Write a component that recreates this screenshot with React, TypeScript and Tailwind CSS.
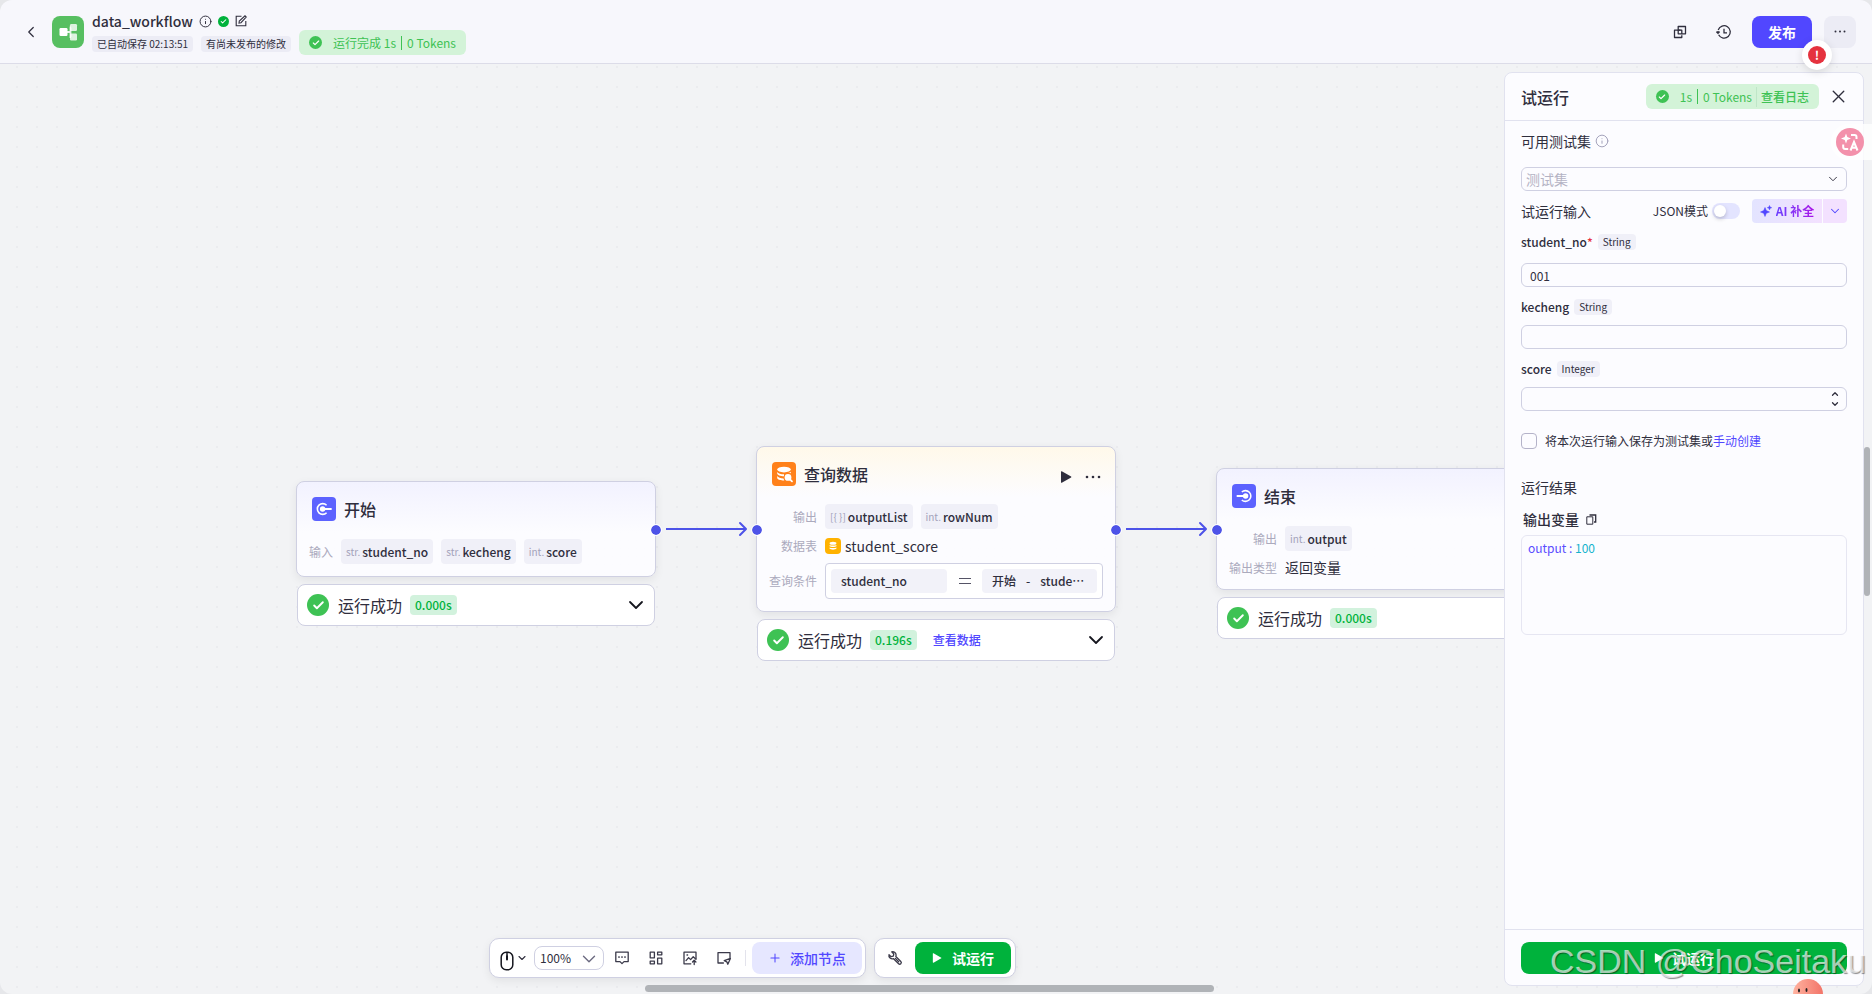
import { useState, type ReactNode } from 'react';
import { Check, ChevronDown, ChevronLeft, ChevronUp, Info, Plus, X } from 'lucide-react';

function CheckDot({ className, size }: { className: string; size: number }) {
  return (
    <span className={`flex shrink-0 items-center justify-center rounded-full text-white ${className}`}>
      <Check size={size} strokeWidth={3.5} />
    </span>
  );
}

function PlayIcon({ className }: { className?: string }) {
  return (
    <svg viewBox="0 0 12 12" className={className} fill="currentColor" aria-hidden="true">
      <path d="M1 .8v10.4c0 .5.4.7.8.5l9.3-5.3c.4-.2.4-.6 0-.8L1.8.3C1.4.1 1 .3 1 .8z" />
    </svg>
  );
}

function Dots({ className }: { className?: string }) {
  return (
    <svg viewBox="0 0 16 4" className={className} fill="currentColor" aria-hidden="true">
      <circle cx="2" cy="2" r="1.3" />
      <circle cx="8" cy="2" r="1.3" />
      <circle cx="14" cy="2" r="1.3" />
    </svg>
  );
}

function StartIcon() {
  return (
    <svg viewBox="0 0 24 24" className="size-6 rounded" aria-hidden="true">
      <rect width="24" height="24" fill="#5c62ff" />
      <path d="M14.6 8.2A5.4 5.4 0 1 0 14.6 15.8" fill="none" stroke="#fff" strokeWidth="1.6" />
      <circle cx="10.6" cy="12" r="2.7" fill="#fff" />
      <path d="M11 12h8" stroke="#fff" strokeWidth="1.8" strokeLinecap="round" />
    </svg>
  );
}

function EndIcon() {
  return (
    <svg viewBox="0 0 24 24" className="size-6 rounded" aria-hidden="true">
      <rect width="24" height="24" fill="#5c62ff" />
      <path d="M9.8 8A5.4 5.4 0 1 1 9.8 16" fill="none" stroke="#fff" strokeWidth="1.6" />
      <circle cx="13.6" cy="12" r="2.7" fill="#fff" />
      <path d="M5.4 12h8" stroke="#fff" strokeWidth="1.8" strokeLinecap="round" />
    </svg>
  );
}

function QueryIcon() {
  return (
    <svg viewBox="0 0 24 24" className="size-6 rounded" aria-hidden="true">
      <rect width="24" height="24" fill="#ff811a" />
      <g fill="#fff">
        <ellipse cx="12" cy="7.6" rx="6.8" ry="2.8" />
        <path d="M5.2 10c1 1.6 3.6 2.3 6.8 2.3v2C8.4 14.3 5.2 13.2 5.2 11.6z" />
        <path d="M5.2 14c1 1.6 3.3 2.3 6.3 2.4l.8 2.2C8.4 18.6 5.2 17.6 5.2 15.8z" />
        <path d="M18.8 9.8v1.6c-.5-.4-1.5-.8-2.5-.9 1.1-.2 2-.4 2.5-.7z" />
        <circle cx="16" cy="15.4" r="3.4" />
      </g>
      <path d="m18.2 17.6 1.8 1.8" stroke="#fff" strokeWidth="1.8" strokeLinecap="round" />
    </svg>
  );
}

function TableIcon() {
  return (
    <svg viewBox="0 0 16 16" className="size-4 rounded" aria-hidden="true">
      <rect width="16" height="16" fill="#ffb200" />
      <g fill="#fff">
        <ellipse cx="8" cy="5.2" rx="3.4" ry="1.5" />
        <path d="M4.6 6.9c1 .8 5.8.8 6.8 0v1.3c-1 1.1-5.8 1.1-6.8 0z" />
        <path d="M4.6 9.5c1 .8 5.8.8 6.8 0v1.3c-1 1.1-5.8 1.1-6.8 0z" />
      </g>
    </svg>
  );
}

function TypedTag({ type, name }: { type: string; name: string }) {
  return (
    <span className="flex h-[25px] items-center gap-[2px] rounded bg-[#f0f0f8] px-[5px] text-xs">
      <span className="text-[10px] text-[#a3a2ba]">{type}</span>
      <span className="font-medium">{name}</span>
    </span>
  );
}

function Row({ label, wide, children }: { label: string; wide?: boolean; children: ReactNode }) {
  return (
    <div className="flex items-center gap-2">
      <span className={`shrink-0 text-right text-xs text-[#abaabd] ${wide ? 'w-12' : 'w-6'}`}>{label}</span>
      {children}
    </div>
  );
}

function StatusBar({ time, link }: { time: string; link?: string }) {
  return (
    <div className="mx-px mt-[7px] flex h-[42px] items-center rounded-lg border border-[#cfd0e2] bg-white pr-[6px] pl-[9px]">
      <CheckDot className="size-[22px] bg-[#3ec254]" size={13} />
      <span className="ml-[9px] text-base">运行成功</span>
      <span className="ml-2 rounded bg-[#d2f2dd] px-[5px] text-xs leading-5 font-medium text-[#00b23c]">{time}</span>
      {link && (
        <a href="#data" className="ml-4 text-xs font-medium text-[#5147ff]">
          {link}
        </a>
      )}
      <button className="ml-auto" aria-label="展开">
        <ChevronDown size={24} strokeWidth={1.8} className="text-[#15161e]" />
      </button>
    </div>
  );
}

function Port({ className }: { className: string }) {
  return <span className={`absolute size-[10px] -translate-1/2 rounded-full bg-[#4d53e8] outline-1 outline-white ${className}`} />;
}

type NodeProps = {
  icon: ReactNode;
  title: string;
  place: string;
  tint: string;
  actions?: ReactNode;
  status: ReactNode;
  children: ReactNode;
};

function FlowNode({ icon, title, place, tint, actions, status, children }: NodeProps) {
  return (
    <section className={`absolute w-[360px] ${place}`}>
      <div
        className={`rounded-lg border border-[#cfd0e2] bg-gradient-to-b to-[#fcfcff] to-[50px] px-3 pb-3 shadow-[0_3px_10px_rgba(0,0,0,0.07)] ${tint}`}
      >
        <header className="flex items-center gap-2 pt-[15px] pb-[18px] pl-[3px]">
          {icon}
          <h2 className="text-base leading-6 font-medium">{title}</h2>
          {actions}
        </header>
        <div className="flex flex-col gap-[7px]">{children}</div>
      </div>
      {status}
    </section>
  );
}

function Arrow({ place }: { place: string }) {
  return (
    <svg viewBox="0 0 84 16" className={`absolute h-4 w-[84px] ${place}`} fill="none" stroke="#4d53e8" strokeWidth="2">
      <path d="M1 8h80" />
      <path d="m75 2 6 6-6 6" strokeLinecap="round" strokeLinejoin="round" />
    </svg>
  );
}

function Canvas() {
  return (
    <div className="absolute inset-0 overflow-hidden bg-[#f2f3f5] bg-[radial-gradient(circle,#ebecef_1px,transparent_1.5px)] bg-[length:20px_20px] bg-[position:7px_13px]">
      <FlowNode
        icon={<StartIcon />}
        title="开始"
        place="left-[296px] top-[417px]"
        tint="from-[#f2f2ff]"
        status={<StatusBar time="0.000s" />}
      >
        <Row label="输入">
          <TypedTag type="str." name="student_no" />
          <TypedTag type="str." name="kecheng" />
          <TypedTag type="int." name="score" />
        </Row>
      </FlowNode>

      <FlowNode
        icon={<QueryIcon />}
        title="查询数据"
        place="left-[756px] top-[382px]"
        tint="from-[#fff9ea]"
        actions={
          <div className="ml-auto flex items-center gap-3 pt-[6px] pr-px">
            <button aria-label="运行节点">
              <PlayIcon className="size-3" />
            </button>
            <button aria-label="更多">
              <Dots className="h-1 w-[18px]" />
            </button>
          </div>
        }
        status={<StatusBar time="0.196s" link="查看数据" />}
      >
        <Row label="输出" wide>
          <TypedTag type="[{ }]" name="outputList" />
          <TypedTag type="int." name="rowNum" />
        </Row>
        <Row label="数据表" wide>
          <span className="flex h-5 items-center gap-1 text-sm">
            <TableIcon />
            student_score
          </span>
        </Row>
        <Row label="查询条件" wide>
          <div className="flex h-9 flex-1 items-center justify-between rounded border border-[#cfd0e2] bg-white px-[5px] text-xs">
            <span className="h-6 w-[116px] rounded bg-[#f2f2f9] px-[10px] leading-6 font-medium">student_no</span>
            <svg viewBox="0 0 12 6" className="h-[6px] w-3" stroke="#555466" strokeWidth="1" aria-label="等于">
              <path d="M0 .5h12M0 5.5h12" />
            </svg>
            <span lang="zh-CN" className="flex h-6 w-[115px] items-center gap-[10px] rounded bg-[#f2f2f9] px-[10px] font-medium">
              <span>开始</span>
              <span>-</span>
              <span>stude…</span>
            </span>
          </div>
        </Row>
      </FlowNode>

      <FlowNode
        icon={<EndIcon />}
        title="结束"
        place="left-[1216px] top-[404px]"
        tint="from-[#f2f2ff]"
        status={<StatusBar time="0.000s" />}
      >
        <Row label="输出" wide>
          <TypedTag type="int." name="output" />
        </Row>
        <Row label="输出类型" wide>
          <span className="text-sm leading-[19px]">返回变量</span>
        </Row>
      </FlowNode>

      <Arrow place="left-[665px] top-[457px]" />
      <Arrow place="left-[1125px] top-[457px]" />
      <Port className="left-[656px] top-[466px]" />
      <Port className="left-[757px] top-[466px]" />
      <Port className="left-[1116px] top-[466px]" />
      <Port className="left-[1217px] top-[466px]" />
    </div>
  );
}

function ToolButton({ label, children }: { label: string; children: ReactNode }) {
  return (
    <button aria-label={label} className="flex h-8 w-[34px] items-center justify-center">
      <svg viewBox="0 0 16 16" className="size-4" fill="none" stroke="#3b3a4a" strokeWidth="1.3" strokeLinejoin="round" strokeLinecap="round">
        {children}
      </svg>
    </button>
  );
}

function Toolbar() {
  return (
    <div className="absolute right-[367px] bottom-4 left-0 flex justify-center gap-2">
      <div className="flex h-10 items-center rounded-[10px] border border-[#cfd0e2] bg-white pr-[3px] pl-[10px] shadow-[0_3px_10px_rgba(0,0,0,0.07)]">
        <button className="flex items-center gap-[2px]" aria-label="鼠标模式">
          <svg viewBox="0 0 14 20" className="mt-[6px] h-5 w-[14px]" fill="none" stroke="#15161e" strokeWidth="1.5">
            <rect x="1.2" y="1.2" width="11.6" height="17.6" rx="5" />
            <path d="M7 4.8v3.6" strokeWidth="2" strokeLinecap="round" />
            <path d="M7 1v3" />
          </svg>
          <ChevronDown size={12} strokeWidth={2.2} />
        </button>
        <div className="relative ml-[6px] text-xs">
          <select aria-label="缩放" className="block h-6 w-[70px] appearance-none rounded-lg border border-[#cfd0e2] bg-white pl-[5px]">
            <option>100%</option>
          </select>
          <ChevronDown size={22} strokeWidth={1.5} className="pointer-events-none absolute top-[2px] right-1 text-[#6b6a80]" />
        </div>
        <div className="ml-px flex">
          <ToolButton label="注释">
            <path d="M1.8 2.2h12.4v9.4H10l-2 2-2-2H1.8z" />
            <path d="M4.9 7h.2M7.9 7h.2M10.9 7h.2" strokeWidth="1.7" />
          </ToolButton>
          <ToolButton label="布局">
            <path d="M2.2 2.2h4.2v5.6H2.2zM9.6 2.2h4.2v2.6H9.6zM2.2 11.2h4.2v2.6H2.2zM9.6 8.2h4.2v5.6H9.6z" />
          </ToolButton>
          <ToolButton label="导出图片">
            <path d="M8.8 13.8H2V2.2h12v6.6" />
            <path d="m4 10.6 2.6-3 2 2 2.6-2.8 2.8 2.4" />
            <path d="M5 5h.6M12.2 14.6v-4M10.5 12l1.7-1.7 1.7 1.7" />
          </ToolButton>
          <ToolButton label="小地图">
            <path d="M7.4 13H2V2.6h12v5" />
            <path d="m8.2 10.6 6.2-2.2-2.6 5.8-1-2.4z" />
          </ToolButton>
        </div>
        <span className="mr-[6px] ml-1 h-4 w-px bg-[#e3e3ec]" />
        <button className="flex h-8 w-[110px] items-center justify-center gap-2 rounded-lg bg-[#e6e7ff] text-sm font-medium text-[#5147ff]">
          <Plus size={14} strokeWidth={1.8} />
          添加节点
        </button>
      </div>
      <div className="flex h-10 items-center rounded-[10px] border border-[#cfd0e2] bg-white pr-1 pl-[3px] shadow-[0_3px_10px_rgba(0,0,0,0.07)]">
        <ToolButton label="调试">
          <path d="M2 4.6 4.1 6.7l2.2-.5.5-2.2L4.7 1.9c2-.6 4.3.6 4.4 3.1 0 .6-.1 1-.3 1.5l5 5a1.5 1.5 0 0 1-2.2 2.2l-5-5C4 9.6 1.3 7.3 2 4.6z" />
          <path d="m8.4 8.4 3.3 3.3" />
        </ToolButton>
        <button className="ml-[3px] flex h-8 w-24 items-center justify-center gap-[10px] rounded-lg bg-[#00b23c] text-sm font-bold text-white">
          <PlayIcon className="size-[10px]" />
          试运行
        </button>
      </div>
    </div>
  );
}

function Header() {
  return (
    <header className="flex h-16 shrink-0 items-center rounded-t-xl border-b border-[#dcdce8] bg-[#f7f7fc] pr-4 pl-[22px]">
      <button aria-label="返回">
        <ChevronLeft size={18} strokeWidth={1.6} />
      </button>
      <svg viewBox="0 0 32 32" className="ml-3 size-8 rounded-lg" aria-hidden="true">
        <rect width="32" height="32" fill="#57bf61" />
        <path d="M14 16h4.5M18.5 16v-4.5H19M18.5 16v5H19" stroke="#fff" strokeOpacity=".85" strokeWidth="1.8" fill="none" />
        <rect x="7.5" y="12" width="8" height="8" rx="1.2" fill="#fff" />
        <rect x="18" y="8" width="7" height="7" rx="1.2" fill="#fff" fillOpacity=".8" />
        <rect x="18" y="17.5" width="7" height="7" rx="1.2" fill="#fff" fillOpacity=".8" />
      </svg>
      <div className="ml-2 flex flex-col gap-[5px]">
        <div className="flex h-5 items-center gap-[6px]">
          <h1 className="text-sm font-medium">data_workflow</h1>
          <Info size={13} strokeWidth={1.8} />
          <CheckDot className="size-[11px] bg-[#00b23c]" size={7} />
          <button aria-label="编辑">
            <svg viewBox="0 0 12 12" className="size-3" fill="none" stroke="currentColor" strokeWidth="1.1">
              <path d="M6.5 1.2H1.2v9.6h9.6V6" />
              <path d="M4 8l.3-2L10 .8l1.2 1.2L6 7.7z" />
            </svg>
          </button>
        </div>
        <div className="flex h-4 items-center gap-2 pb-px text-[10px] leading-4">
          <span className="rounded bg-[#ececf5] px-[5px]">已自动保存 02:13:51</span>
          <span className="rounded bg-[#ececf5] px-[5px]">有尚未发布的修改</span>
        </div>
      </div>
      <div className="mt-[22px] ml-2 flex h-[25px] items-center rounded-md bg-[#d3f3d8] px-[10px] text-xs text-[#3ec254]">
        <CheckDot className="size-[13px] bg-[#3ec254]" size={8} />
        <span className="ml-[11px]">运行完成 1s</span>
        <span className="mx-[5px] h-[14px] w-px bg-[#3ec254]" />
        <span>0 Tokens</span>
      </div>

      <div className="relative ml-auto flex items-center">
        <button aria-label="复制" className="flex size-8 items-center justify-center">
          <svg viewBox="0 0 14 14" className="size-[14px]" fill="none" stroke="currentColor" strokeWidth="1.3" strokeLinejoin="round">
            <path d="M7.5 5.2H5.2V1.5h7.3v7.3H8.8" />
            <path d="M6.5 8.8h2.3V5.2H1.5v7.3h7.3v-2.3M5.2 5.2v3.6h1.6" />
          </svg>
        </button>
        <button aria-label="历史" className="ml-3 flex size-8 items-center justify-center">
          <svg viewBox="0 0 16 16" className="size-4" fill="none" stroke="currentColor" strokeWidth="1.3">
            <path d="M2.6 10.8A6.2 6.2 0 1 0 2.2 6" />
            <path d="M.3 7.6 2 9.3l1.7-1.7M2 9V7M8 4.8v4h3" />
          </svg>
        </button>
        <button className="ml-3 h-8 w-[60px] rounded-lg bg-[#5147ff] text-sm font-bold text-white">发布</button>
        <button aria-label="更多" className="ml-3 flex size-8 items-center justify-center rounded-lg bg-[#ececf5]">
          <Dots className="h-[3px] w-3" />
        </button>
        <span className="absolute top-6 right-6 z-20 flex size-[30px] items-center justify-center rounded-full bg-white shadow-[0_2px_8px_rgba(0,0,0,0.12)]">
          <span className="flex size-[18px] items-center justify-center rounded-full bg-[#e5323e] text-xs font-bold text-white">!</span>
        </span>
      </div>
    </header>
  );
}

function FieldLabel({ id, type, required }: { id: string; type: string; required?: boolean }) {
  return (
    <div className="flex h-4 items-center gap-[5px] text-xs">
      <label htmlFor={id} className="font-medium">
        {id}
        {required && <span className="align-top text-[#e5323e]">*</span>}
      </label>
      <span className="rounded bg-[#f0f0f8] px-[5px] text-[10px] leading-4">{type}</span>
    </div>
  );
}

const fieldClass = 'block h-6 w-full appearance-none rounded-md border border-[#cfd0e2] bg-transparent px-2 text-xs';

function RunPanel() {
  const [studentNo, setStudentNo] = useState('001');
  const [kecheng, setKecheng] = useState('');
  const [score, setScore] = useState('');

  return (
    <aside className="absolute top-2 right-2 bottom-2 flex w-[360px] flex-col rounded-lg border border-[#e1e2ef] bg-[#fcfcff]">
      <header className="flex h-12 shrink-0 items-center border-b border-[#e1e2ef] pr-[14px] pl-4">
        <h2 className="text-base font-medium">试运行</h2>
        <div className="ml-auto flex h-[25px] items-center rounded-md bg-[#d3f3d8] px-[10px] text-xs text-[#3ec254]">
          <CheckDot className="size-[13px] bg-[#3ec254]" size={8} />
          <span className="ml-[11px]">1s</span>
          <span className="mx-[5px] h-[15px] w-px bg-[#3ec254]" />
          <span>0 Tokens</span>
          <span className="mx-1 h-5 w-px bg-[#bfe6c8]" />
          <a href="#log" className="font-medium">
            查看日志
          </a>
        </div>
        <button aria-label="关闭" className="ml-[9px]">
          <X size={21} strokeWidth={1.6} />
        </button>
      </header>

      <div className="flex-1 px-4 pt-[10px]">
        <div className="flex h-5 items-center gap-1 text-sm">
          <label htmlFor="testset">可用测试集</label>
          <Info size={14} strokeWidth={1.7} className="text-[#a3a2ba]" />
        </div>
        <div className="relative mt-4">
          <select
            id="testset"
            defaultValue=""
            className="block h-6 w-full appearance-none rounded-md border border-[#cfd0e2] bg-transparent pl-1 text-sm leading-5 text-[#b4b3c4]"
          >
            <option value="">测试集</option>
          </select>
          <ChevronDown size={14} strokeWidth={1.6} className="pointer-events-none absolute top-[5px] right-[7px]" />
        </div>

        <div className="mt-2 flex h-6 items-center">
          <h3 className="text-sm">试运行输入</h3>
          <label className="ml-auto flex items-center gap-1 text-xs">
            JSON模式
            <input
              type="checkbox"
              role="switch"
              className="flex h-4 w-7 appearance-none items-center rounded-full bg-[#e3e4ff] px-[2px] before:size-3 before:rounded-full before:bg-white before:shadow-[0_2px_4px_rgba(0,0,0,0.2)]"
            />
          </label>
          <div className="ml-3 flex h-6 gap-px">
            <button className="flex w-[70px] items-center justify-center gap-1 rounded-l bg-gradient-to-r from-[#e3e4ff] to-[#f3e1ff] text-xs font-bold">
              <svg viewBox="0 0 12 12" className="size-3" fill="#5147ff" aria-hidden="true">
                <path d="M5 2.5 6.3 5.5 9.5 7 6.3 8.3 5 11.5 3.7 8.3.5 7l3.2-1.5zM9.5.5l.6 1.6 1.6.6-1.6.6-.6 1.6-.6-1.6-1.6-.6 1.6-.6z" stroke="#5147ff" strokeWidth=".5" />
              </svg>
              <span className="bg-gradient-to-r from-[#6a3dff] to-[#a80ee8] bg-clip-text text-transparent">AI 补全</span>
            </button>
            <button aria-label="更多补全" className="flex w-6 items-center justify-center rounded-r bg-[#f3e1ff] text-[#5147ff]">
              <ChevronDown size={14} strokeWidth={1.8} />
            </button>
          </div>
        </div>

        <div className="mt-[11px]">
          <FieldLabel id="student_no" type="String" required />
          <input id="student_no" value={studentNo} onChange={(e) => setStudentNo(e.target.value)} className={`mt-[13px] ${fieldClass}`} />
        </div>
        <div className="mt-3">
          <FieldLabel id="kecheng" type="String" />
          <input id="kecheng" value={kecheng} onChange={(e) => setKecheng(e.target.value)} className={`mt-[10px] ${fieldClass}`} />
        </div>
        <div className="mt-3">
          <FieldLabel id="score" type="Integer" />
          <div className="relative mt-[10px]">
            <input id="score" inputMode="numeric" value={score} onChange={(e) => setScore(e.target.value)} className={fieldClass} />
            <div className="absolute top-[2px] right-[7px] flex flex-col">
              <button aria-label="增加" onClick={() => setScore(String(Number(score) + 1))}>
                <ChevronUp size={10} strokeWidth={3} />
              </button>
              <button aria-label="减少" onClick={() => setScore(String(Number(score) - 1))}>
                <ChevronDown size={10} strokeWidth={3} />
              </button>
            </div>
          </div>
        </div>

        <div className="mt-[22px] flex h-4 items-center gap-2 text-xs">
          <input id="save" type="checkbox" className="size-4 appearance-none rounded border border-[#b4b3c9]" />
          <span>
            <label htmlFor="save">将本次运行输入保存为测试集或</label>
            <a href="#create" className="text-[#5147ff]">
              手动创建
            </a>
          </span>
        </div>

        <h3 className="mt-7 text-sm leading-5">运行结果</h3>
        <div className="mt-3 flex h-5 items-center gap-[7px] pl-[2px] text-sm">
          <h4 className="font-medium">输出变量</h4>
          <button aria-label="复制结果">
            <svg viewBox="0 0 11 11" className="size-[11px]" fill="none" stroke="currentColor" strokeWidth="1">
              <path d="M.8 2.8h6v7.4h-6z" />
              <path d="M3.5 1h6.2v7H8" strokeWidth="1.3" />
            </svg>
          </button>
        </div>
        <div className="mt-[6px] h-[100px] rounded-md border border-[#e6e6f2] px-[6px] py-[3px] text-xs leading-[18px]">
          <span className="text-[#5a4dff]">output : </span>
          <span className="text-[#15b3cc]">100</span>
        </div>
      </div>

      <footer className="shrink-0 border-t border-[#e1e2ef] px-4 pt-3 pb-[11px]">
        <button className="flex h-8 w-full items-center justify-center gap-2 rounded-lg bg-[#00b23c] text-sm font-bold text-white">
          <PlayIcon className="size-[10px]" />
          试运行
        </button>
      </footer>
    </aside>
  );
}

function TranslateTab() {
  return (
    <button aria-label="翻译" className="absolute top-[60px] right-0 flex h-9 w-[41px] items-center rounded-l-full bg-white/80 pl-[5px]">
      <svg viewBox="0 0 28 28" className="size-7" aria-hidden="true">
        <circle cx="14" cy="14" r="14" fill="#f391ab" />
        <path d="M10 5.5 11.3 9 15 10.5 11.3 12 10 15.5 8.7 12 5 10.5 8.7 9z" fill="#fff" />
        <path d="M15 7h3.5a2 2 0 0 1 2 2v2M7.2 16.5V19a2 2 0 0 0 2 2h3" fill="none" stroke="#fff" strokeWidth="2" />
        <path d="m14.5 22.5 3.5-8.5 3.5 8.5M15.8 19.8h4.4" fill="none" stroke="#fff" strokeWidth="2" />
      </svg>
    </button>
  );
}

export default function App() {
  return (
    <div className="flex h-screen flex-col overflow-hidden bg-[#e6e7ea] font-['Noto_Sans_CJK_SC',sans-serif] text-[#2f2e3d]">
      <Header />
      <main className="relative flex-1 overflow-hidden rounded-b-xl">
        <Canvas />
        <Toolbar />
        <RunPanel />
        <TranslateTab />
        <span className="absolute top-[383px] right-[2px] h-[149px] w-[6px] rounded-full bg-[#b0b3b7]" />
        <span className="absolute bottom-[2px] left-[645px] h-[7px] w-[569px] rounded-full bg-[#b0b3b7]" />
        <svg viewBox="0 0 30 15" className="absolute right-[49px] bottom-0 h-[15px] w-[30px]" aria-hidden="true">
          <defs>
            <linearGradient id="face">
              <stop offset="0" stopColor="#ffb3a0" />
              <stop offset="1" stopColor="#f27468" />
            </linearGradient>
          </defs>
          <circle cx="15" cy="15" r="15" fill="url(#face)" />
          <ellipse cx="6" cy="11.5" rx="1" ry="2" fill="#222" />
          <ellipse cx="13.5" cy="11" rx="1" ry="2" fill="#222" />
        </svg>
        <p className="pointer-events-none absolute right-[6px] bottom-2 font-['Liberation_Sans',sans-serif] text-[34px] leading-[50px] text-white/65 [text-shadow:1px_1px_1px_rgba(0,0,0,0.45)]">
          CSDN @ChoSeitaku
        </p>
      </main>
    </div>
  );
}
